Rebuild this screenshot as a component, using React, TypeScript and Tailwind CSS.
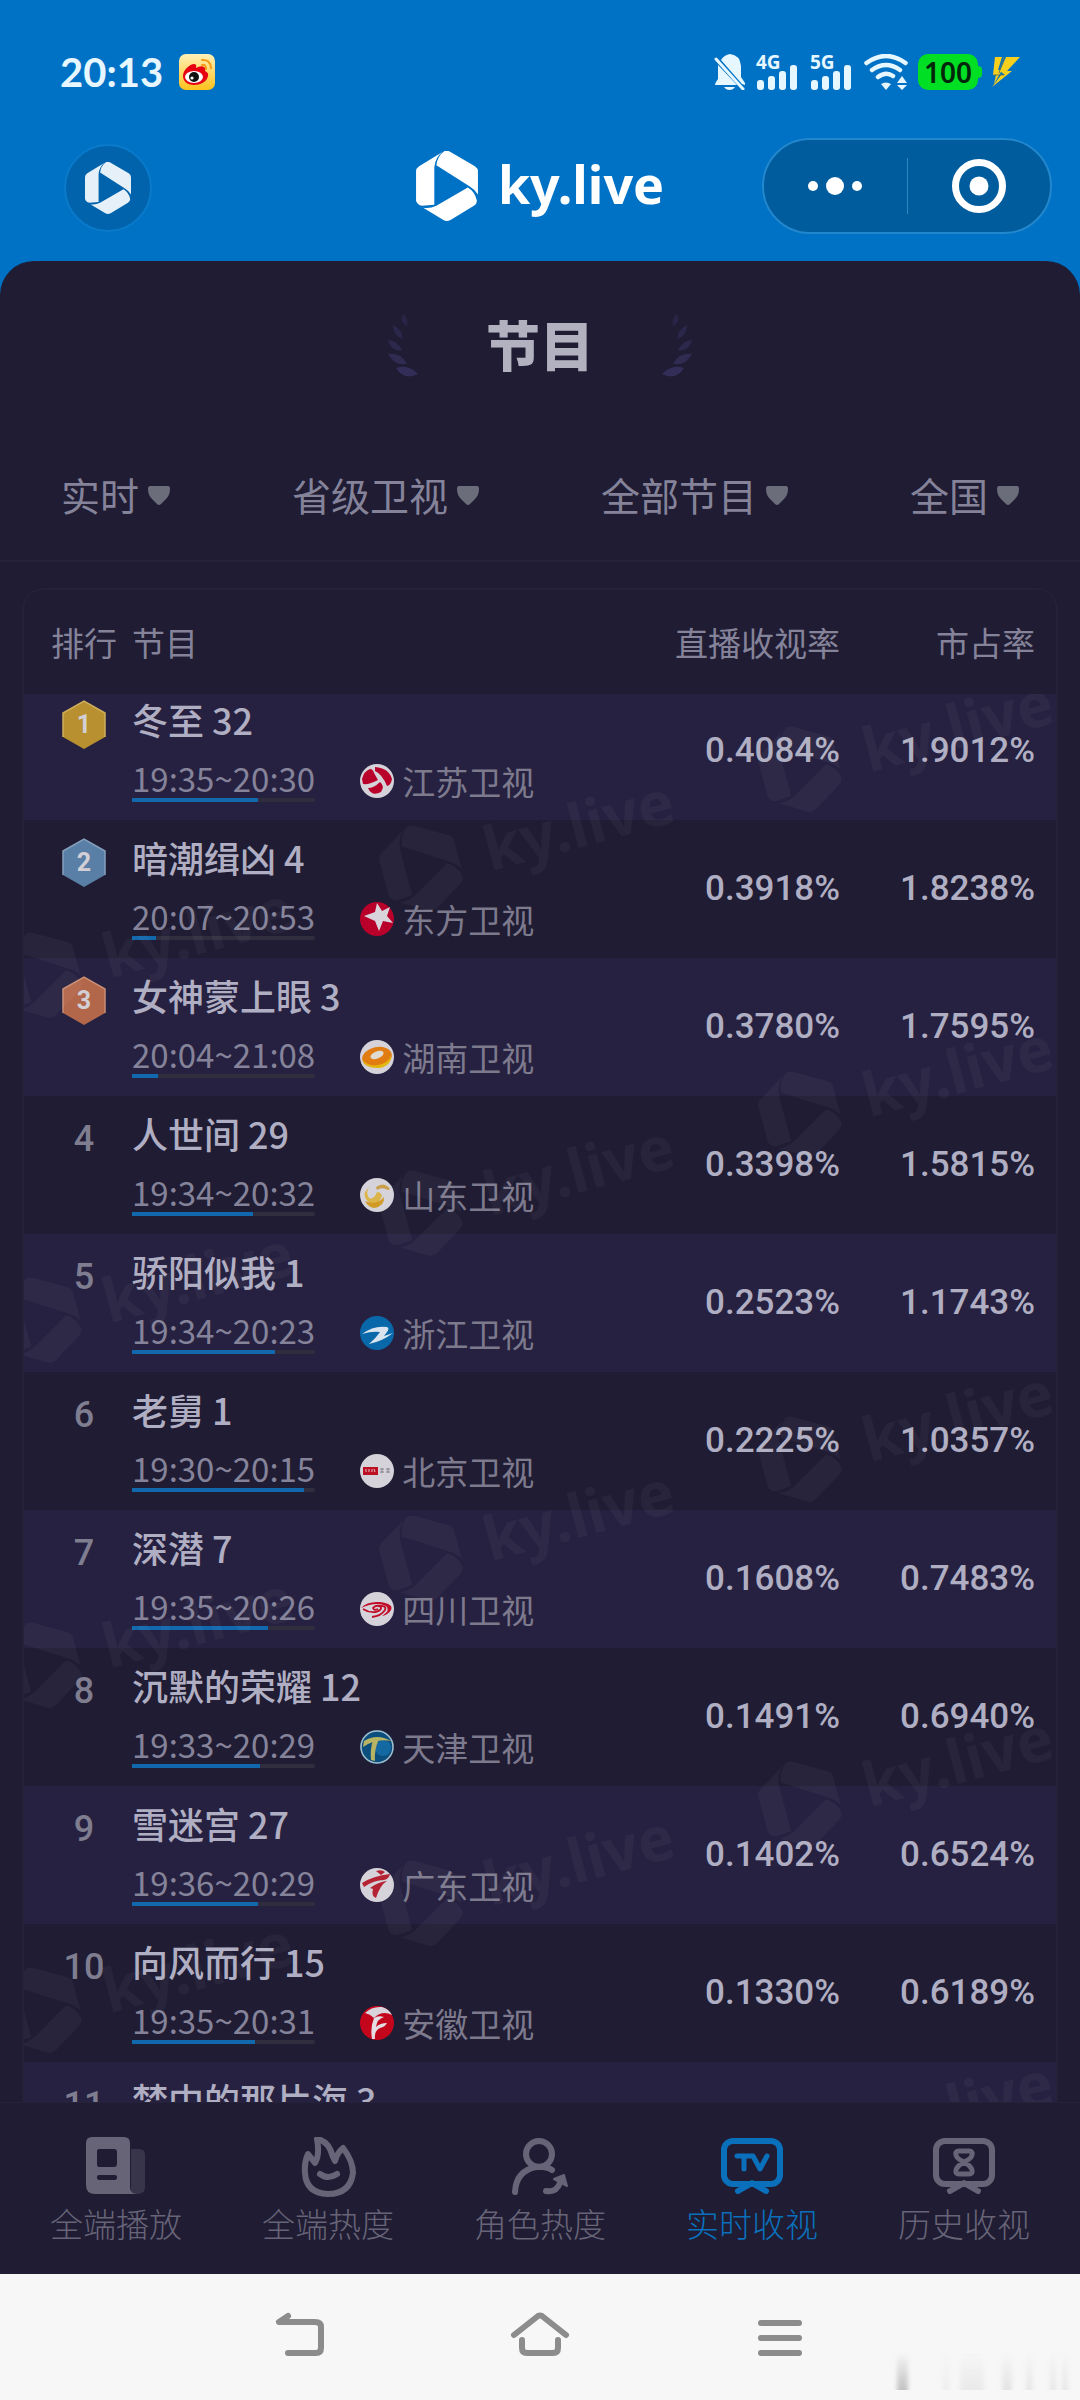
import type { ReactNode } from "react"

interface Program {
  name: string
  time?: string
  progress?: number
  channel?: string
  rating?: string
  share?: string
}

const programs: Program[] = [
  { name: "冬至 32", time: "19:35~20:30", progress: 69, channel: "江苏卫视", rating: "0.4084%", share: "1.9012%" },
  { name: "暗潮缉凶 4", time: "20:07~20:53", progress: 13, channel: "东方卫视", rating: "0.3918%", share: "1.8238%" },
  { name: "女神蒙上眼 3", time: "20:04~21:08", progress: 14, channel: "湖南卫视", rating: "0.3780%", share: "1.7595%" },
  { name: "人世间 29", time: "19:34~20:32", progress: 66, channel: "山东卫视", rating: "0.3398%", share: "1.5815%" },
  { name: "骄阳似我 1", time: "19:34~20:23", progress: 78, channel: "浙江卫视", rating: "0.2523%", share: "1.1743%" },
  { name: "老舅 1", time: "19:30~20:15", progress: 94, channel: "北京卫视", rating: "0.2225%", share: "1.0357%" },
  { name: "深潜 7", time: "19:35~20:26", progress: 74, channel: "四川卫视", rating: "0.1608%", share: "0.7483%" },
  { name: "沉默的荣耀 12", time: "19:33~20:29", progress: 70, channel: "天津卫视", rating: "0.1491%", share: "0.6940%" },
  { name: "雪迷宫 27", time: "19:36~20:29", progress: 69, channel: "广东卫视", rating: "0.1402%", share: "0.6524%" },
  { name: "向风而行 15", time: "19:35~20:31", progress: 67, channel: "安徽卫视", rating: "0.1330%", share: "0.6189%" },
  { name: "梦中的那片海 3" },
]

const filters = [
  { label: "时段", value: "实时" },
  { label: "频道", value: "省级卫视" },
  { label: "类型", value: "全部节目" },
  { label: "地区", value: "全国" },
]

const medals = [
  { fill: "#b8902f", edge: "#cfae5c" },
  { fill: "#5a7fa6", edge: "#84a0bd" },
  { fill: "#b3674a", edge: "#c98d74" },
]

function LogoShape() {
  return (
    <>
      <path d="M0 20Q0 17 3 15L26 1Q19 6 18 16V53L6 54Q1 53 0 49Z" />
      <path d="M28 0Q31-1 34 1L58 15Q61 17 61 20V43Q58 38 53 35L20 14Q21 5 28 0Z" />
      <path d="M51 36Q58 40 60 49Q60 52 57 54L34 68Q30 70 27 68L7 56Q14 57 20 54Z" />
    </>
  )
}

function StatusBar() {
  return (
    <div className="mt-12 flex h-12 items-center justify-between px-[60px] text-[#e6f7ff]">
      <div className="flex items-center gap-4">
        <span className="font-['Lato',sans-serif] text-[40px] leading-12 font-bold">20:13</span>
        <svg className="size-9" viewBox="0 0 36 36">
          <defs>
            <linearGradient id="weibo" x1="0" y1="0" x2="0" y2="1">
              <stop offset="0" stopColor="#fff0b8" />
              <stop offset="1" stopColor="#fdc31c" />
            </linearGradient>
          </defs>
          <rect width="36" height="36" rx="7" fill="url(#weibo)" />
          <path d="M4 22C4 16 11 10 15 10Q18 10 17 14Q22 11 25 13Q27 14 26 17Q30 19 29 22C28 28 21 31 15 31C8 31 4 27 4 22Z" fill="#e60012" />
          <ellipse cx="15" cy="23" rx="9" ry="6" fill="#fff" />
          <circle cx="15" cy="23" r="5" fill="#111" />
          <circle cx="13" cy="24" r="1.6" fill="#fff" />
          <path d="M23 6Q31 5 32 14M23 11Q27 10 27 15" fill="none" stroke="#f59a16" strokeWidth="2" strokeLinecap="round" />
        </svg>
      </div>
      <div className="flex items-center gap-[10px]">
        <svg className="h-9 w-8" viewBox="0 0 32 36" fill="currentColor">
          <path d="M7 6Q10 1 16 0Q26 1 27 12V23L31 29V31L28 30Z" />
          <path d="M4 11L23 31H1Q1 29 4 25Z" />
          <path d="M10 33H21Q19 36 15.500 36Q12 36 10 33Z" />
          <path d="M2 5L29 35" stroke="currentColor" strokeWidth="3" strokeLinecap="round" />
        </svg>
        {["4G", "5G"].map((network) => (
          <div key={network} className="relative h-9 w-[44px]">
            <span className="absolute -top-1 left-0 font-['Noto_Sans',sans-serif] text-[19px] leading-6 font-bold">{network}</span>
            <svg className="h-9 w-[44px]" viewBox="0 0 44 36" fill="currentColor">
              <rect x="1" y="26" width="7" height="10" rx="3" />
              <rect x="12" y="22" width="7" height="14" rx="3" />
              <rect x="23" y="17" width="7" height="19" rx="3" />
              <rect x="34" y="11" width="7" height="25" rx="3" />
            </svg>
          </div>
        ))}
        <svg className="h-9 w-[44px]" viewBox="0 0 44 36" fill="none" stroke="currentColor" strokeWidth="4.500" strokeLinecap="round">
          <path d="M2.500 9Q22-5 41.500 9M8 16Q22 6 36 16M14 23Q22 17 29 22" />
          <path d="M17 30Q22 27 27 30L22 36Z" fill="currentColor" stroke="none" />
          <path d="M33 29L38 22L43 29ZM33 31L38 36L43 31Z" fill="currentColor" stroke="none" />
        </svg>
        <div className="flex items-center">
          <span className="flex h-9 w-[60px] items-center justify-center rounded-[10px] bg-[#00df24] font-['Noto_Sans',sans-serif] text-[28px] leading-9 font-semibold text-[#04260a]">100</span>
          <span className="h-3 w-1 rounded-r-sm bg-[#00df24]" />
        </div>
        <svg className="h-[30px] w-7" viewBox="0 0 28 30" fill="#f7cf1d">
          <path d="M3 0H10L6 13H10L2 27L4 18H1Z" />
          <path d="M14 0H28L15 14H20L0 30L9 18H13L8 14Z" />
          <path d="M12 0L7 16M1 18H12" stroke="#5c7a5a" strokeWidth="1" />
        </svg>
      </div>
    </div>
  )
}

function TopBar() {
  return (
    <header className="mt-[42px] mb-[27px] grid h-24 grid-cols-[1fr_auto_1fr] items-center px-7 text-white">
      <a href="#home" aria-label="主页" className="mt-1 ml-9 flex size-[88px] items-center justify-center rounded-full border-2 border-[#0b7acb] bg-[#0063ab]">
        <svg className="h-[52px] w-[46px] text-[#e6f0f8]" viewBox="0 0 61 69" fill="currentColor">
          <LogoShape />
        </svg>
      </a>
      <div className="flex items-center gap-5">
        <svg className="h-[70px] w-[62px]" viewBox="0 0 61 69" fill="currentColor">
          <LogoShape />
        </svg>
        <h1 className="pb-1 font-['Noto_Sans',sans-serif] text-[52px] leading-[68px] font-bold">ky.live</h1>
      </div>
      <div className="flex h-24 w-[290px] items-center justify-self-end rounded-full border-2 border-[#2287cc] bg-[#005c9d]">
        <button aria-label="更多" className="flex flex-1 items-center justify-center gap-2">
          <span className="size-[10px] rounded-full bg-white" />
          <span className="size-[18px] rounded-full bg-white" />
          <span className="size-[10px] rounded-full bg-white" />
        </button>
        <span className="h-14 w-px bg-[#2f86c0]" />
        <button aria-label="关闭" className="flex flex-1 items-center justify-center">
          <svg className="size-[54px]" viewBox="0 0 54 54">
            <circle cx="27" cy="27" r="23.500" fill="none" stroke="#fff" strokeWidth="7" />
            <circle cx="27" cy="27" r="9.500" fill="#fff" />
          </svg>
        </button>
      </div>
    </header>
  )
}

function Laurel({ flip }: { flip?: boolean }) {
  return (
    <svg className={flip ? "h-16 w-[30px] -scale-x-100" : "h-16 w-[30px]"} viewBox="0 0 30 64" fill="#332e57">
      <path d="M15 0Q21 5 19 12Q11 8 15 0Z" opacity=".55" />
      <path d="M5 11Q14 15 15 25Q5 22 5 11Z" opacity=".65" />
      <path d="M0 26Q11 27 14 37Q3 37 0 26Z" opacity=".75" />
      <path d="M0 40Q13 38 19 50Q6 52 0 40Z" opacity=".85" />
      <path d="M8 54Q20 50 30 60Q16 67 8 54Z" />
    </svg>
  )
}

// Station marks, each drawn on a 34x34 disc
const stationMarks: Record<string, { disc: string; mark: ReactNode }> = {
  江苏卫视: {
    disc: "#d5d2da",
    mark: (
      <>
        <path d="M2 15Q4 7 10 5Q13 5 14 9L18 16Q9 21 3 20Z" fill="#b8002a" />
        <path d="M15 3Q29 4 32 15Q31 21 27 22Q22 10 15 7Z" fill="#b8002a" />
        <path d="M8 24Q14 24 20 18Q25 22 21 28Q12 33 8 24Z" fill="#b8002a" />
      </>
    ),
  },
  东方卫视: {
    disc: "#b8002a",
    mark: <path d="M17 1L22 9L30 5L27 14L33 21L23 19L19 29L15 19L4 14L15 10Z" fill="#d9d4dc" />,
  },
  湖南卫视: {
    disc: "#d5d2da",
    mark: (
      <>
        <ellipse cx="17" cy="17" rx="15" ry="10" fill="#e07c12" transform="rotate(-12 17 17)" />
        <path d="M2 19Q8 27 18 25Q29 23 31 15Q32 25 20 28Q5 29 2 19Z" fill="#e3b710" />
        <ellipse cx="17" cy="15" rx="7" ry="3.500" fill="#e0dbd0" transform="rotate(-22 17 15)" />
      </>
    ),
  },
  山东卫视: {
    disc: "#d5d2da",
    mark: (
      <>
        <path d="M10 8Q5 14 9 20Q14 22 17 14Q21 14 22 18Q19 27 10 25Q3 20 5 14Z" fill="#dcb54a" />
        <path d="M16 9Q24 3 30 11Q28 13 26 11Q21 9 17 12Z" fill="#c9a049" />
        <path d="M5 23Q16 28 24 19Q25 28 14 30Q8 29 5 23Z" fill="#d19a25" />
      </>
    ),
  },
  浙江卫视: {
    disc: "#0868aa",
    mark: <path d="M2 18Q14 9 27 11Q31 12 24 20L33 17Q23 25 9 28Q16 22 20 16Q12 15 2 18Z" fill="#d9e4ee" />,
  },
  北京卫视: {
    disc: "#d5d2da",
    mark: (
      <>
        <rect x="3" y="13" width="15" height="8" fill="#bd0f24" />
        <path d="M6 15V18M9 15V18M12 15V18M14 15L15 18" stroke="#e5b9c0" strokeWidth="1" />
        <path d="M20 15H24M20 18H24M22 14V19M26 15H30M26 18H30M28 14V19" stroke="#85838d" strokeWidth="1" />
      </>
    ),
  },
  四川卫视: {
    disc: "#d5d2da",
    mark: (
      <>
        <path d="M1 16Q7 9 20 10Q34 12 31 18Q28 23 22 24Q31 18 26 14Q16 9 1 16Z" fill="#c20d28" />
        <path d="M3 17Q9 21 16 20Q22 18 21 15Q16 12 13 16Q14 19 18 17M18 14Q27 13 25 18Q21 24 12 25" fill="none" stroke="#c20d28" strokeWidth="1.800" />
      </>
    ),
  },
  天津卫视: {
    disc: "#0a4f7e",
    mark: (
      <>
        <circle cx="17" cy="17" r="16" fill="none" stroke="#a9bcc9" strokeWidth="1.500" />
        <circle cx="23" cy="18" r="8" fill="#1569a3" />
        <path d="M4 11Q17 3 31 11Q16 8 3 17Z" fill="#b7b464" />
        <path d="M13 10L19 9Q14 20 15 31L11 30Q10 19 13 10Z" fill="#b7b464" />
      </>
    ),
  },
  广东卫视: {
    disc: "#d5d2da",
    mark: (
      <>
        <path d="M2 15Q13 8 30 6Q29 11 24 12Q14 12 4 19Z" fill="#b52233" />
        <path d="M10 20Q18 14 27 13Q20 17 16 30Q11 28 13 21Z" fill="#b52233" />
        <path d="M16 3Q22 1 25 4L21 7Z" fill="#b52233" />
      </>
    ),
  },
  安徽卫视: {
    disc: "#c4061c",
    mark: (
      <>
        <path d="M5 7Q12 0 22 1Q29 3 32 9Q22 4 14 12Q10 8 5 7Z" fill="#d9d4dc" />
        <path d="M14 12Q10 22 12 33L15 33Q14 25 20 22Q25 21 27 17Q20 17 16 21Q17 13 24 11Q18 9 14 12Z" fill="#e4dde3" />
      </>
    ),
  },
}

function Channel({ name }: { name: string }) {
  const station = stationMarks[name]
  return (
    <div className="flex items-center gap-2">
      <svg className="size-[34px]" viewBox="0 0 34 34">
        <circle cx="17" cy="17" r="17" fill={station.disc} />
        {station.mark}
      </svg>
      <span className="text-[33px] leading-[42px] text-[#7d7a8e]">{name}</span>
    </div>
  )
}

function Rank({ value }: { value: number }) {
  const medal = medals[value - 1]
  if (!medal) {
    return <span className="font-['Roboto',sans-serif] text-[36px] leading-[50px] font-medium text-[#7f7d90]">{value}</span>
  }
  return (
    <div className="relative mx-auto h-[50px] w-[44px]">
      <svg className="h-[50px] w-[44px]" viewBox="0 0 44 50">
        <path d="M22 1L43 13V37L22 49L1 37V13Z" fill={medal.fill} />
        <path d="M1 37V13L22 1L43 13V37" fill="none" stroke={medal.edge} strokeWidth="1.500" />
      </svg>
      <span className="absolute inset-0 font-['Roboto',sans-serif] text-[25px] leading-[50px] font-bold text-[#d3cfd6]">{value}</span>
    </div>
  )
}

function ProgramTable() {
  return (
    <table className="w-full table-fixed border-collapse">
      <thead>
        <tr className="h-[104px] text-[33px] leading-[42px] text-[#85839a]">
          <th className="w-[108px] pl-3 text-center font-normal">排行</th>
          <th className="text-left font-normal">节目</th>
          <th className="w-[200px] text-right font-normal">直播收视率</th>
          <th className="w-[216px] pr-[21px] text-right font-normal">市占率</th>
        </tr>
      </thead>
      <tbody>
        {programs.map((p, i) => (
          <tr key={p.name} className="group h-[138px] odd:bg-[#262140] first:h-[126px]">
            <td className="pt-[18px] pl-3 text-center align-top group-first:pt-[6px]">
              <Rank value={i + 1} />
            </td>
            <td className="pt-[13px] align-top group-first:pt-px">
              <div className="text-[36px] leading-12 font-medium text-[#b0aec2]">{p.name}</div>
              {p.channel && (
                <div className="mt-[15px] flex items-end gap-[45px]">
                  <div className="text-[33px] leading-10 text-[#85839a]">
                    {p.time}
                    <div className="h-1 rounded-full bg-[#302d3f]">
                      <div className="h-1 bg-[#1168ad]" style={{ width: `${p.progress}%` }} />
                    </div>
                  </div>
                  <Channel name={p.channel} />
                </div>
              )}
            </td>
            <td className="text-right font-['Roboto',sans-serif] text-[35px] leading-12 font-medium text-[#b0aec2] group-first:pb-3">
              {p.rating}
            </td>
            <td className="pr-[21px] text-right font-['Roboto',sans-serif] text-[35px] leading-12 font-medium text-[#b0aec2] group-first:pb-3">
              {p.share}
            </td>
          </tr>
        ))}
      </tbody>
    </table>
  )
}

function Watermarks() {
  const marks = [0, 1, 2, 3, 4].flatMap((n) => [
    { x: 776, y: 76 + n * 345 },
    { x: 397, y: 175 + n * 345 },
    { x: 16, y: 282 + n * 345 },
  ])
  return (
    <div className="pointer-events-none absolute inset-x-0 top-[104px] bottom-0 overflow-hidden" aria-hidden="true">
      <svg className="h-full w-full" fill="#fff" fillOpacity=".04">
        {marks.map((m) => (
          <g key={`${m.x}-${m.y}`} transform={`translate(${m.x} ${m.y}) rotate(-15) scale(1.270) translate(-30 -35)`}>
            <LogoShape />
            <text x="82" y="51" fontFamily="Noto Sans" fontWeight="700" fontSize="48">
              ky.live
            </text>
          </g>
        ))}
      </svg>
    </div>
  )
}

const tabs = [
  {
    label: "全端播放",
    icon: (
      <>
        <path d="M46 12H54Q60 12 60 18V50Q60 57 53 57H46Z" fill="currentColor" opacity=".35" />
        <path fillRule="evenodd" d="M7 0H39Q45 0 45 6V50Q45 57 52 57H10Q1 57 1 48V6Q1 0 7 0ZM14 12Q12 12 12 15V27Q12 30 14 30H29Q32 30 32 27V15Q32 12 29 12ZM14 38Q12 38 12 40Q12 43 14 43H30Q32 43 32 40Q32 38 30 38Z" fill="currentColor" />
      </>
    ),
  },
  {
    label: "全端热度",
    icon: (
      <path
        d="M20 2Q32 4 36 20L38 24Q40 16 46 11Q56 24 56 36Q53 57 31 57Q9 56 8 36Q7 26 11 17L18 26Q23 18 20 2ZM23 37Q31 43 40 37"
        fill="none"
        stroke="currentColor"
        strokeWidth="6"
        strokeLinecap="round"
        strokeLinejoin="round"
      />
    ),
  },
  {
    label: "角色热度",
    icon: (
      <>
        <circle cx="30" cy="17" r="13" fill="none" stroke="currentColor" strokeWidth="6" />
        <path d="M6 55Q7 34 27 30Q37 29 43 33M37 54Q47 56 51 46" fill="none" stroke="currentColor" strokeWidth="6" strokeLinecap="round" strokeLinejoin="round" />
        <path d="M45 42L55 38L58 49Z" fill="currentColor" stroke="currentColor" strokeWidth="2" strokeLinejoin="round" />
      </>
    ),
  },
  {
    label: "实时收视",
    active: true,
    icon: (
      <g fill="none" stroke="currentColor" strokeWidth="6" strokeLinecap="round" strokeLinejoin="round">
        <rect x="3" y="4" width="56" height="43" rx="9" />
        <path d="M17 54L31 46L45 54" />
        <path d="M16 19H32L39 32L46 19M23 20V32" strokeWidth="5" />
      </g>
    ),
  },
  {
    label: "历史收视",
    icon: (
      <g fill="none" stroke="currentColor" strokeWidth="6" strokeLinecap="round" strokeLinejoin="round">
        <rect x="3" y="4" width="56" height="43" rx="9" />
        <path d="M17 54L31 46L45 54" />
        <path d="M26 14H36Q40 14 39 18Q38 22 31 25Q24 22 23 18Q22 14 26 14ZM26 37H36Q40 37 39 33Q38 29 31 25Q24 29 23 33Q22 37 26 37Z" strokeWidth="5" />
      </g>
    ),
  },
]

function TabBar() {
  return (
    <nav className="flex h-[172px] shrink-0 border-t border-[#25223a] bg-[#1f1c33] px-[10px] pt-[34px]">
      {tabs.map((tab) => (
        <a key={tab.label} href="#tab" className={`flex flex-1 flex-col items-center gap-1 ${tab.active ? "text-[#0b70bb]" : "text-[#676477]"}`}>
          <svg className="h-[60px] w-[62px]" viewBox="0 0 62 60">
            {tab.icon}
          </svg>
          <span className="text-[33px] leading-11 font-light">{tab.label}</span>
        </a>
      ))}
    </nav>
  )
}

function SystemNav() {
  return (
    <div className="relative flex h-[126px] shrink-0 items-center justify-center gap-[180px] bg-[#f7f7f7] pb-1 text-[#8c8c8c]">
      <button aria-label="返回">
        <svg className="h-[46px] w-[60px]" viewBox="0 0 60 46" fill="none" stroke="currentColor" strokeWidth="6" strokeLinecap="round" strokeLinejoin="round">
          <path d="M18 4L9 10H45Q51 10 51 15V36Q51 41 46 41H18" />
        </svg>
      </button>
      <button aria-label="桌面">
        <svg className="h-[46px] w-[60px]" viewBox="0 0 60 46" fill="none" stroke="currentColor" strokeWidth="6" strokeLinecap="round" strokeLinejoin="round">
          <path d="M4 23L28 4Q30 3 32 4L56 23M12 28V36Q12 41 17 41H43Q48 41 48 36V28" />
        </svg>
      </button>
      <button aria-label="最近任务">
        <svg className="h-[46px] w-[60px]" viewBox="0 0 60 46" fill="none" stroke="currentColor" strokeWidth="6" strokeLinecap="round">
          <path d="M11 11H49M11 26H49M11 41H49" />
        </svg>
      </button>
      <svg className="absolute right-2 bottom-[10px] h-[38px] w-[180px]" viewBox="0 0 180 38">
        <defs>
          <linearGradient id="fade" x1="0" y1="0" x2="0" y2="1">
            <stop offset="0" stopColor="#8c8c8c" stopOpacity="0" />
            <stop offset="1" stopColor="#8c8c8c" stopOpacity=".5" />
          </linearGradient>
          <filter id="soften" x="-5%" width="110%" y="0" height="100%">
            <feGaussianBlur stdDeviation="2 0" />
          </filter>
        </defs>
        <g fill="url(#fade)" filter="url(#soften)">
          <rect x="5" width="11" height="38" />
          <rect x="50" width="8" height="38" opacity=".15" />
          <rect x="68" width="24" height="38" opacity=".25" />
          <rect x="110" width="10" height="38" opacity=".35" />
          <rect x="134" width="7" height="38" opacity=".3" />
          <rect x="158" width="6" height="38" opacity=".3" />
          <rect x="170" width="6" height="38" opacity=".3" />
        </g>
      </svg>
    </div>
  )
}

export default function App() {
  return (
    <div className="flex h-screen flex-col overflow-hidden bg-[#0072c6] font-['Noto_Sans_CJK_SC',sans-serif]">
      <StatusBar />
      <TopBar />
      <main className="flex min-h-0 flex-1 flex-col rounded-t-[34px] bg-[#1f1c33]">
        <div className="flex h-[170px] shrink-0 items-center justify-center gap-[68px]">
          <Laurel />
          <h2 className="pb-1 text-[54px] leading-[72px] font-black text-[#b2b1c0]">节目</h2>
          <Laurel flip />
        </div>
        <div className="flex h-[131px] shrink-0 items-center justify-between border-b-2 border-[#242139] px-[61px]">
          {filters.map((f) => (
            <label key={f.label} className="flex items-center gap-2">
              <select aria-label={f.label} className="appearance-none bg-transparent pb-1 text-[39px] leading-[56px] text-[#85839a]">
                <option>{f.value}</option>
              </select>
              <svg className="h-5 w-[22px]" viewBox="0 0 22 20" fill="#6b6d7a">
                <path d="M2 0H20Q22 0 22 3Q22 9 18 13L13 18Q11 20 9 18L4 13Q0 9 0 3Q0 0 2 0Z" />
              </svg>
            </label>
          ))}
        </div>
        <section className="relative mx-[22px] mt-[26px] min-h-0 flex-1 overflow-hidden rounded-t-[22px] border-2 border-b-0 border-[#242139]">
          <ProgramTable />
          <Watermarks />
        </section>
      </main>
      <TabBar />
      <SystemNav />
    </div>
  )
}
